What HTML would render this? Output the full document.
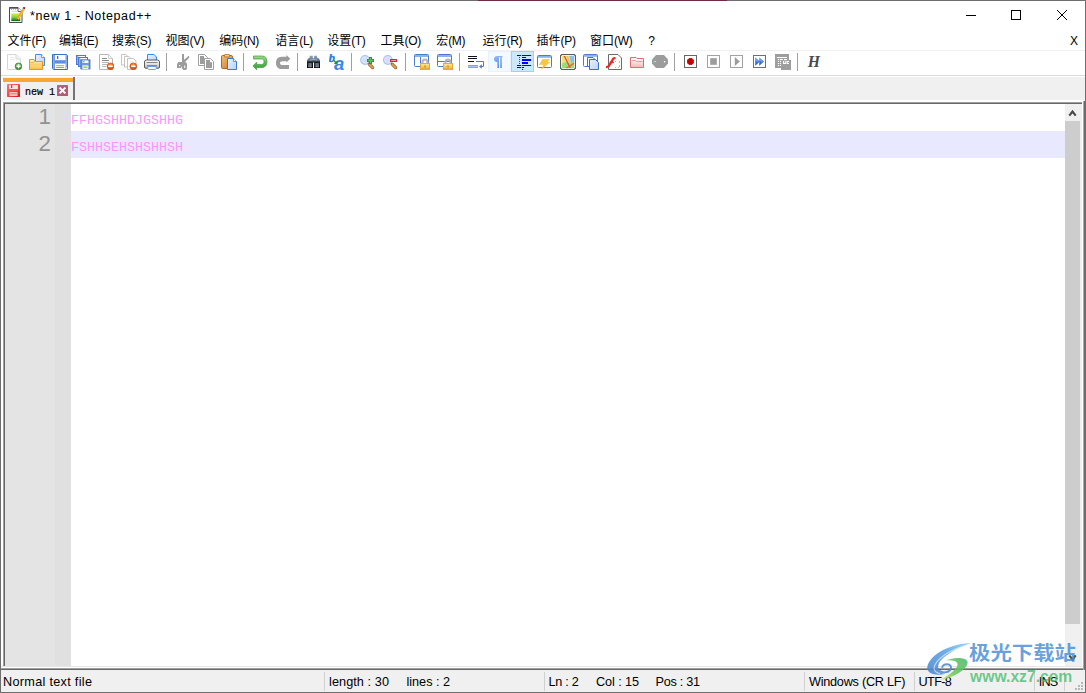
<!DOCTYPE html>
<html lang="zh-CN">
<head>
<meta charset="utf-8">
<title>*new 1 - Notepad++</title>
<style>
*{box-sizing:border-box;margin:0;padding:0}
html,body{width:1086px;height:693px;overflow:hidden;background:#fff}
body{position:relative;font-family:"Liberation Sans","Noto Sans CJK SC",sans-serif;font-size:12px;color:#000}
.abs{position:absolute}
#win{position:absolute;left:0;top:0;width:1086px;height:693px;background:#fff;overflow:hidden}
#bl{left:0;top:0;width:1px;height:693px;background:#6e6e6e}
#bt{left:0;top:0;width:1086px;height:1px;background:#6e6e6e}
#bb{left:0;top:692px;width:1086px;height:1px;background:#6e6e6e}
#br{left:1085px;top:0;width:1px;height:693px;background:#6e6e6e}
#title{left:30px;top:8px;font-size:12.500px;letter-spacing:0.6px;line-height:16px;white-space:nowrap}
#menubar{left:1px;top:31px;width:1085px;height:19px}
#menubar span{position:absolute;top:2px;line-height:16px;font-size:12px;white-space:nowrap}
#menubar i{font-style:normal;letter-spacing:-0.35px}
#menuline{left:1px;top:50px;width:1085px;height:1px;background:#f0f0f0}
#toolbar{left:1px;top:51px;width:1085px;height:24px;background:#fff}
.sep{position:absolute;top:53px;width:1px;height:18px;background:#a0a0a0}
.ic{position:absolute;top:54px;width:16px;height:16px}
#tabbar{left:1px;top:75px;width:1085px;height:27px;background:#f0f0f0;border-top:1px solid #dcdcdc;box-shadow:inset 0 1px 0 #fff, inset 2px 0 0 #fff}
#tab{left:3px;top:78px;width:71px;height:23px;background:#f0f0f0}
#tabtop{left:3px;top:78px;width:71px;height:4px;background:#faa732}
#tabr{left:73px;top:77px;width:2px;height:24px;background:#747474}
#tabtext{left:25px;top:85.5px;font-family:"Liberation Mono",monospace;font-weight:normal;-webkit-text-stroke:0.2px #000;font-size:10px;line-height:14px;white-space:pre}
#edwhite{left:1px;top:100px;width:1083px;height:2px;background:#fff}
#edtop1{left:3px;top:102px;width:1079px;height:1px;background:#a0a0a0}
#edtop2{left:4px;top:103px;width:1078px;height:1px;background:#696969}
#edl1{left:3px;top:102px;width:1px;height:566px;background:#a0a0a0}
#edl2{left:4px;top:103px;width:1px;height:565px;background:#696969}
#edr{left:1083px;top:101px;width:3px;height:569px;background:linear-gradient(to right,#a8a8a8 0,#a8a8a8 1px,#6a6a6a 1px,#6a6a6a 3px)}
#edrw{left:1082px;top:102px;width:1px;height:566px;background:#fff}
#editor{left:5px;top:104px;width:1077px;height:562px;background:#fff}
#lnmargin{left:5px;top:104px;width:50px;height:562px;background:#e4e4e4}
#foldmargin{left:55px;top:104px;width:16px;height:562px;background:#e0e0e0}
.ln{position:absolute;left:5px;width:46px;text-align:right;font-size:22.3px;line-height:27px;color:#929292;font-family:"Liberation Sans",sans-serif}
#curline{left:71px;top:131px;width:994px;height:27px;background:#e8e8ff}
.code{position:absolute;left:71px;font-family:"Liberation Mono",monospace;font-size:13.33px;line-height:27px;color:#ff94ff;white-space:pre}
#sb{left:1065px;top:104px;width:17px;height:563px;background:#f0f0f0}
#sbthumb{left:1065px;top:121px;width:15px;height:503px;background:#cdcdcd}
#edbot1{left:1px;top:666px;width:1082px;height:2px;background:#fff;border-top:1px solid #e6e6e6}
#edbot2{left:0;top:668px;width:1086px;height:2px;background:#696969;border-top:1px solid #a0a0a0}
#status{left:1px;top:670px;width:1084px;height:22px;background:#f0f0f0}
#status span{position:absolute;top:5px;font-size:12.7px;line-height:15px;white-space:nowrap}
.ssep{position:absolute;top:672px;width:1px;height:19px;background:#d0d0d0}
</style>
</head>
<body>
<div id="win">
<svg class="abs" style="left:9px;top:7px;width:17px;height:16px" viewBox="0 0 17 16">
<defs><linearGradient id="gti" x1="0" y1="0" x2="0" y2="1"><stop offset="0" stop-color="#d8ec40"/><stop offset="0.45" stop-color="#8ed648"/><stop offset="0.8" stop-color="#2c9a24"/><stop offset="1" stop-color="#0a5a0c"/></linearGradient></defs>
<path d="M0.500,0.500H9L13,4.500V15.500H0.500Z" fill="#fff" stroke="#4c4c4c"/>
<path d="M0.500,1H9" stroke="#4c4c4c" stroke-width="1.400"/>
<path d="M9,0.500V4.500H13" fill="#fff" stroke="#4c4c4c" stroke-width="0.900"/>
<path d="M2,2.400H3M4,2.400H5M6,2.400H7" stroke="#9a9a9a" stroke-width="0.800"/>
<path d="M2.500,4.300H8" stroke="#b4cde6" stroke-width="0.800"/>
<rect x="2.300" y="6.400" width="9" height="7.700" fill="url(#gti)"/>
<path d="M14.300,2.600L8.400,12.200" stroke="#f0a41a" stroke-width="2.600"/>
<path d="M14.800,2.900L9,12.400" stroke="#f8c848" stroke-width="0.900"/>
<path d="M8.700,11.700L7.800,13L9.300,12.600Z" fill="#5a3a10"/>
<path d="M14.900,1.700L14.200,2.800" stroke="#b8c8dc" stroke-width="2.600"/>
<rect x="14.100" y="0.100" width="2" height="1.900" fill="#8e0a0a" transform="rotate(30 15.1 1)"/>
</svg>
<div class="abs" style="left:966px;top:15px;width:10px;height:1px;background:#000"></div>
<div class="abs" style="left:1011px;top:10px;width:10px;height:10px;border:1px solid #000"></div>
<svg class="abs" style="left:1056px;top:9px;width:12px;height:12px" viewBox="0 0 12 12"><path d="M1,1L11,11M11,1L1,11" stroke="#000" stroke-width="1" fill="none"/></svg>

<div class="abs" id="title">*new 1 - Notepad++</div>
<!-- menu -->
<div class="abs" id="menubar">
<span style="left:6.5px">文件<i>(F)</i></span>
<span style="left:58.1px">编辑<i>(E)</i></span>
<span style="left:111.1px">搜索<i>(S)</i></span>
<span style="left:164.5px">视图<i>(V)</i></span>
<span style="left:218.3px">编码<i>(N)</i></span>
<span style="left:274.3px">语言<i>(L)</i></span>
<span style="left:326.2px">设置<i>(T)</i></span>
<span style="left:379.6px">工具<i>(O)</i></span>
<span style="left:435.2px">宏<i>(M)</i></span>
<span style="left:481.6px">运行<i>(R)</i></span>
<span style="left:535.6px">插件<i>(P)</i></span>
<span style="left:589.0px">窗口<i>(W)</i></span>
<span style="left:647.2px">?</span>
<span style="left:1069px">X</span>
</div>
<div class="abs" id="menuline"></div>
<div class="abs" id="toolbar"></div>
<div class="abs" style="left:488px;top:51px;width:23px;height:21px;background:#f3f9ff;border:1px solid #e8f2fc"></div>
<div class="abs" style="left:511px;top:51px;width:23px;height:21px;background:#cce8ff;border:1px solid #99d1ff"></div>
<svg class="ic" style="left:6px;top:54px" viewBox="0 0 16 16"><defs><linearGradient id="gnew" x1="0" y1="0" x2="0" y2="1"><stop offset="0" stop-color="#8fd46f"/><stop offset="1" stop-color="#2e8a1e"/></linearGradient></defs>
<path d="M1.5,0.5H10L14.5,5V15.5H1.5Z" fill="#fdfdfd" stroke="#d6d6d6"/>
<path d="M10,0.5V5H14.5" fill="#f2f2f2" stroke="#d9d9d9"/>
<path d="M4,3.5h4M4,5.5h5" stroke="#ececec"/>
<circle cx="12.5" cy="12.3" r="3.3" fill="url(#gnew)" stroke="#2f7d22" stroke-width="0.8"/>
<path d="M12.5,10.3v4M10.5,12.3h4" stroke="#fff" stroke-width="1.4"/></svg>
<svg class="ic" style="left:29px;top:54px" viewBox="0 0 16 16"><defs><linearGradient id="gop" x1="0" y1="0" x2="0" y2="1"><stop offset="0" stop-color="#fff2b8"/><stop offset="1" stop-color="#f7c340"/></linearGradient>
<linearGradient id="gpg" x1="0" y1="0" x2="1" y2="1"><stop offset="0" stop-color="#e8f1fe"/><stop offset="1" stop-color="#b9d3f8"/></linearGradient></defs>
<path d="M6.5,0.5H12.5L15.5,3.5V11.5H6.5Z" fill="url(#gpg)" stroke="#4d88dc"/>
<path d="M12.5,0.5V3.5H15.5" fill="#fff" stroke="#4d88dc" stroke-width="0.8"/>
<path d="M0.5,5.5H5L6.5,7.5H13.5V15.5H0.5Z" fill="url(#gop)" stroke="#e5922f"/>
<path d="M1.5,8.5H4.5L6,7" stroke="#f0b050" fill="none"/>
<path d="M1.5,10.2H12.5" stroke="#f3c566" stroke-width="0.8"/></svg>
<svg class="ic" style="left:52px;top:54px" viewBox="0 0 16 16"><defs><linearGradient id="gsv" x1="0" y1="0" x2="1" y2="0"><stop offset="0" stop-color="#9fc0f0"/><stop offset="0.2" stop-color="#5d8fe0"/><stop offset="0.8" stop-color="#5d8fe0"/><stop offset="1" stop-color="#9fc0f0"/></linearGradient></defs>
<path d="M0.5,0.5H14.5L15.5,1.5V15.5H1.5L0.5,14.5Z" fill="url(#gsv)" stroke="#3e6ebf"/>
<rect x="3" y="1" width="10.5" height="5.2" fill="#fff"/>
<rect x="5" y="2" width="1.3" height="3" fill="#3e6ebf"/>
<rect x="3" y="9.6" width="10.5" height="5.4" fill="#fff"/>
<rect x="4.2" y="11.2" width="8" height="1" fill="#7cc04a"/>
<rect x="4.2" y="13" width="8" height="1" fill="#7cc04a"/>
<rect x="14" y="13.6" width="1" height="1" fill="#fff"/></svg>
<svg class="ic" style="left:75px;top:54px" viewBox="0 0 16 16"><rect x="1.5" y="1.5" width="9" height="9" fill="#e4edfb" stroke="#4a7bd0"/><rect x="2" y="2" width="1.6" height="8" fill="#8fb0ec"/><rect x="3.6" y="2" width="6" height="1.2" fill="#fff"/><rect x="3.5" y="3.5" width="9" height="9" fill="#e4edfb" stroke="#4a7bd0"/><rect x="4" y="4" width="1.6" height="8" fill="#8fb0ec"/><rect x="5.6" y="4" width="6" height="1.2" fill="#fff"/><rect x="5.9" y="5.9" width="9" height="9" fill="#6a98e4" stroke="#3e6ebf"/><rect x="7.4" y="6.4" width="6" height="2.6" fill="#fff"/><rect x="8.4" y="6.9" width="1" height="1.5" fill="#3e6ebf"/><rect x="7.4" y="11.4" width="6" height="3.5" fill="#fff"/><rect x="8.2" y="12.4" width="4.4" height="1.6" fill="#a4d840"/></svg>
<svg class="ic" style="left:98px;top:54px" viewBox="0 0 16 16"><defs><radialGradient id="gcl" cx="0.5" cy="0.3" r="0.7"><stop offset="0" stop-color="#f79a4a"/><stop offset="1" stop-color="#d5480a"/></radialGradient></defs>
<path d="M1.5,0.5H10.5L14.5,4.5V15.5H1.5Z" fill="#fff" stroke="#b5b5b5"/>
<path d="M10.5,0.5V4.5H14.5" fill="#f4f4f4" stroke="#c5c5c5" stroke-width="0.8"/>
<path d="M4,4.5h5M4,6.5h7" stroke="#8a8a8a"/><path d="M4,8.5h7M4,10.5h5M4,12.5h4" stroke="#b8b8b8"/>
<circle cx="12.5" cy="12.3" r="3.4" fill="url(#gcl)" stroke="#c4470c" stroke-width="0.6"/>
<rect x="10.2" y="11.6" width="4.6" height="1.5" rx="0.4" fill="#fff"/></svg>
<svg class="ic" style="left:121px;top:54px" viewBox="0 0 16 16"><defs><radialGradient id="gcl2" cx="0.5" cy="0.3" r="0.7"><stop offset="0" stop-color="#f79a4a"/><stop offset="1" stop-color="#d5480a"/></radialGradient></defs><path d="M0.5,0.5H5.0L7.5,3.0V11.0H0.5Z" fill="#fff" stroke="#c4c4c4"/><path d="M3.5,2.5H8.0L10.5,5.0V13.0H3.5Z" fill="#fff" stroke="#c4c4c4"/><path d="M6.5,4.5H12.5L15.0,7.0V15.5H6.5Z" fill="#fff" stroke="#c4c4c4"/>
<path d="M9,8h3" stroke="#e4e4e4"/>
<circle cx="12.3" cy="12.3" r="3.4" fill="url(#gcl2)" stroke="#c4470c" stroke-width="0.6"/>
<rect x="10" y="11.6" width="4.6" height="1.5" rx="0.4" fill="#fff"/></svg>
<svg class="ic" style="left:144px;top:54px" viewBox="0 0 16 16"><defs><linearGradient id="gpr" x1="0" y1="0" x2="0" y2="1"><stop offset="0" stop-color="#ffffff"/><stop offset="0.5" stop-color="#e2e2e2"/><stop offset="1" stop-color="#b4b4b4"/></linearGradient>
<linearGradient id="gpg2" x1="0" y1="0" x2="1" y2="1"><stop offset="0" stop-color="#e8f1fe"/><stop offset="1" stop-color="#b9d3f8"/></linearGradient></defs>
<path d="M3.5,7V0.5H10L12.5,3V7Z" fill="url(#gpg2)" stroke="#3d88e0"/>
<path d="M2.5,6H13.5Q15.5,6 15.5,8V13Q15.500,14.200 14.500,14.200H1.5Q0.5,14.200 0.5,13V8Q0.5,6 2.5,6Z" fill="url(#gpr)" stroke="#4a4a4a" stroke-width="0.9"/>
<path d="M2.5,8.5H13.5" stroke="#6a6a6a" stroke-width="0.8"/>
<path d="M3.800,12.500H12.200V14.700L11.400,15.500H4.600L3.800,14.700Z" fill="#f4f8ff" stroke="#5a9ae6" stroke-width="0.900"/><path d="M3,11.500H13" stroke="#707070" stroke-width="0.800"/></svg>
<div class="sep" style="left:166px"></div>
<svg class="ic" style="left:175px;top:54px" viewBox="0 0 16 16"><path d="M7,0H9V5.800L12.300,3.200L13,2L14.300,2.200L14,4L10,8L11.200,8.500L12,10V14.500L11,16H8.500L7,14.500V12L6,14H2V10L3.500,8H7Z" fill="#9c9c9c"/>
<rect x="4" y="11" width="1.200" height="1.200" fill="#fff"/><rect x="9.200" y="11.500" width="1" height="2.600" fill="#fff"/></svg>
<svg class="ic" style="left:198px;top:54px" viewBox="0 0 16 16"><path d="M0.5,0.5H6.5L9.5,3.5V11.5H0.5Z" fill="#fff" stroke="#a0a0a0"/>
<path d="M2,2H6V4.2H8V10H2Z" fill="#9c9c9c"/>
<path d="M6.500,4.5H12.500L15.500,7.5V15.500H6.500Z" fill="#fff" stroke="#a0a0a0"/>
<path d="M8,6H12V8.200H14V14H8Z" fill="#9c9c9c"/></svg>
<svg class="ic" style="left:221px;top:54px" viewBox="0 0 16 16"><defs><linearGradient id="gpa" x1="0" y1="0" x2="1" y2="1"><stop offset="0" stop-color="#f0c080"/><stop offset="1" stop-color="#c47a30"/></linearGradient>
<linearGradient id="gpg3" x1="0" y1="0" x2="1" y2="1"><stop offset="0" stop-color="#e8f1fe"/><stop offset="1" stop-color="#b9d3f8"/></linearGradient></defs>
<rect x="0.5" y="1.5" width="11" height="13" rx="1.2" fill="url(#gpa)" stroke="#b0671c"/>
<rect x="3.5" y="0.5" width="5" height="2.4" rx="0.6" fill="#f9d778" stroke="#b0671c" stroke-width="0.8"/>
<path d="M6.500,4.5H12.500L15.500,7.5V15.500H6.500Z" fill="url(#gpg3)" stroke="#3c78d8"/>
<path d="M12.500,4.5V7.5H15.500" fill="#fff" stroke="#3c78d8" stroke-width="0.8"/></svg>
<div class="sep" style="left:243px"></div>
<svg class="ic" style="left:252px;top:54px" viewBox="0 0 16 16"><defs><linearGradient id="gun" x1="0" y1="0" x2="0" y2="1"><stop offset="0" stop-color="#9fdc8f"/><stop offset="0.5" stop-color="#5cb85c"/><stop offset="1" stop-color="#3a9a3a"/></linearGradient></defs>
<path d="M1.5,2H10C13.500,2 15,4.5 15,7.700C15,11 13.200,13.500 10,13.500H4.600V15.800L1,12L4.600,8.200V10.400H9.800C11.400,10.400 12,9.200 12,7.700C12,6.200 11.400,5 9.800,5H1.500Z" fill="url(#gun)" stroke="#3f9a33" stroke-width="0.7"/></svg>
<svg class="ic" style="left:275px;top:54px" viewBox="0 0 16 16"><path d="M11.500,1L15.300,4.800L11.500,8.500V7.300H7.500C6,7.300 5,8 5,9.200C5,10.400 6,11 7.500,11H14V15H6.200C3,15 1,12.500 1,9C1,5.500 3,2.700 6.500,2.700H11.500Z" fill="#9c9c9c"/></svg>
<div class="sep" style="left:297px"></div>
<svg class="ic" style="left:306px;top:54px" viewBox="0 0 16 16"><defs><linearGradient id="gfi" x1="0" y1="0" x2="0" y2="1"><stop offset="0" stop-color="#93a5bb"/><stop offset="0.380" stop-color="#62717f"/><stop offset="0.520" stop-color="#1a1e24"/><stop offset="1" stop-color="#08080a"/></linearGradient>
<linearGradient id="gfh" x1="0" y1="0" x2="0" y2="1"><stop offset="0" stop-color="#6c7888"/><stop offset="1" stop-color="#aab4c0"/></linearGradient></defs>
<path d="M3.600,1.800H6.800V4.200H8.100V1.800H11V3.800L13,4.500L14,6.500V14H8.100V8.500H7V14H1V6.500L2,4.500L3.600,3.800Z" fill="url(#gfi)"/>
<path d="M4,6.200C6,5.200 9,5.200 11,6.200" stroke="#9cc0e8" stroke-width="0.800" fill="none"/>
<rect x="2.400" y="9" width="3.200" height="4.200" fill="url(#gfh)"/><rect x="9.500" y="9" width="3.200" height="4.200" fill="url(#gfh)"/>
<path d="M3.900,9.500V13.200M11,9.500V13.200" stroke="#3c4654" stroke-width="0.800"/></svg>
<svg class="ic" style="left:329px;top:54px" viewBox="0 0 16 16"><text x="-0.200" y="8" font-family="Liberation Serif,serif" font-weight="bold" font-style="italic" font-size="12.500" fill="#2f78e0" stroke="#2f78e0" stroke-width="0.300">b</text>
<text x="5" y="15.900" font-family="Liberation Sans,sans-serif" font-weight="bold" font-style="italic" font-size="18.500" fill="#3f86e6">a</text>
<path d="M4.200,5.800L7,8.600" stroke="#3aa040" stroke-width="1.500"/><path d="M8.800,10.400L4.800,9.800L8.200,6.400Z" fill="#2f9030"/></svg>
<div class="sep" style="left:351px"></div>
<svg class="ic" style="left:360px;top:54px" viewBox="0 0 16 16"><circle cx="5" cy="6" r="4.300" fill="#dbe8fa" stroke="#a9c5ee" stroke-width="1.2"/><circle cx="5" cy="6" r="2.600" fill="#cfe0f7"/><path d="M9.200,10.200L12.600,13.600" stroke="#9a5f24" stroke-width="3.200" stroke-linecap="round"/><path d="M9.200,10.200L12.600,13.600" stroke="#d9a866" stroke-width="1.600" stroke-linecap="round"/><path d="M10.500,3V10M7,6.500H14" stroke="#2f8a35" stroke-width="3"/><path d="M10.500,3.800V9.200M7.800,6.500H13.200" stroke="#5fc060" stroke-width="1.400"/></svg>
<svg class="ic" style="left:383px;top:54px" viewBox="0 0 16 16"><circle cx="4.8" cy="6" r="4.300" fill="#dbe8fa" stroke="#a9c5ee" stroke-width="1.2"/><circle cx="4.8" cy="6" r="2.600" fill="#cfe0f7"/><path d="M9.200,10.200L12.600,13.600" stroke="#9a5f24" stroke-width="3.200" stroke-linecap="round"/><path d="M9.200,10.200L12.600,13.600" stroke="#d9a866" stroke-width="1.600" stroke-linecap="round"/><rect x="7" y="5" width="7" height="3" rx="0.5" fill="#e81c2c"/><rect x="8" y="6" width="5" height="1" fill="#ff9aa0"/></svg>
<div class="sep" style="left:405px"></div>
<svg class="ic" style="left:414px;top:54px" viewBox="0 0 16 16"><defs><linearGradient id="lg1" x1="0" y1="0" x2="0" y2="1"><stop offset="0" stop-color="#fdeea8"/><stop offset="0.5" stop-color="#f7cc58"/><stop offset="1" stop-color="#eaa22a"/></linearGradient></defs><rect x="0.500" y="0.500" width="14" height="12" rx="1" fill="#fff" stroke="#4b7bcd"/>
<rect x="1" y="1" width="13" height="2" fill="#8db2ea"/>
<path d="M6.500,3V12.500" stroke="#4b7bcd"/><path d="M8.500,9.500V8A2.500,2.500 0 0 1 13.500,8V9.500" fill="none" stroke="#b4b4b4" stroke-width="2"/>
<rect x="6.500" y="9.500" width="9" height="6" fill="url(#lg1)" stroke="#e6a83a"/>
<rect x="10" y="11.500" width="2" height="2" fill="#c88a2a" opacity="0.7"/></svg>
<svg class="ic" style="left:437px;top:54px" viewBox="0 0 16 16"><defs><linearGradient id="lg2" x1="0" y1="0" x2="0" y2="1"><stop offset="0" stop-color="#fdeea8"/><stop offset="0.5" stop-color="#f7cc58"/><stop offset="1" stop-color="#eaa22a"/></linearGradient></defs><rect x="0.500" y="0.500" width="14" height="12" rx="1" fill="#fff" stroke="#4b7bcd"/>
<rect x="1" y="1" width="13" height="2" fill="#8db2ea"/>
<path d="M0.500,7.500H14.500" stroke="#4b7bcd"/><path d="M8.500,9.500V8A2.500,2.500 0 0 1 13.500,8V9.500" fill="none" stroke="#b4b4b4" stroke-width="2"/>
<rect x="6.500" y="9.500" width="9" height="6" fill="url(#lg2)" stroke="#e6a83a"/>
<rect x="10" y="11.500" width="2" height="2" fill="#c88a2a" opacity="0.7"/></svg>
<div class="sep" style="left:459px"></div>
<svg class="ic" style="left:468px;top:54px" viewBox="0 0 16 16"><path d="M0,2.500H9M0,4.500H9M0,7.500H6" stroke="#111" stroke-width="1"/>
<path d="M8,7.500H15.500V12.500H13" fill="none" stroke="#4a7cc4" stroke-width="1"/>
<path d="M11,12.500L13.800,10.300V14.700Z" fill="#4a7cc4"/>
<rect x="0" y="11" width="10" height="3" fill="#7ea8e8"/>
<rect x="0" y="12" width="10" height="1" fill="#a9c6f2"/></svg>
<svg class="ic" style="left:491px;top:54px" viewBox="0 0 16 16"><defs><linearGradient id="gpl" x1="0" y1="0" x2="0" y2="1"><stop offset="0" stop-color="#8fb6f0"/><stop offset="1" stop-color="#5a8de0"/></linearGradient></defs>
<path d="M6.500,2H11.500V3.300H10.800V14H9.200V3.300H8V14H6.400V8.200C4,8.200 3,6.800 3,5.100C3,3.400 4,2 6.500,2Z" fill="url(#gpl)"/></svg>
<svg class="ic" style="left:516px;top:54px" viewBox="0 0 16 16"><g stroke="#0000ff" stroke-width="1">
<path d="M1,1.500H5M6,1.500H15"/><path d="M6,3.500H10"/>
<path d="M6,6H15" stroke-width="2"/><path d="M6,9H12" stroke-width="2"/>
<path d="M1,11.500H5M6,11.500H15"/><path d="M1,13.500H5M6,13.500H8"/><path d="M6,15.500H7"/></g>
<g fill="#ff0000"><rect x="3" y="3" width="1" height="1"/><rect x="3" y="5" width="1" height="1"/><rect x="3" y="7" width="1" height="1"/><rect x="3" y="9" width="1" height="1"/></g></svg>
<svg class="ic" style="left:537px;top:54px" viewBox="0 0 16 16"><rect x="0.500" y="1.500" width="14" height="12" rx="1" fill="#fff" stroke="#4b7bcd"/>
<rect x="1" y="2" width="13" height="1.800" fill="#8db2ea"/>
<path d="M5.500,5.500H12.500L9.800,8.300H12.800L4.500,15.200L6.800,10.500H2.500Z" fill="#f6c842" stroke="#f0b020" stroke-width="0.4"/></svg>
<svg class="ic" style="left:560px;top:54px" viewBox="0 0 16 16"><rect x="0.500" y="0.500" width="15" height="15" rx="1.800" fill="#e9e378" stroke="#4e4e58"/>
<path d="M9,1H15V8L11,9Z" fill="#8fbcec"/>
<path d="M1,10L6,8L11,9L15,8V15H1Z" fill="#98dc78"/>
<path d="M4,1.500L10.500,14.500" stroke="#f04838" stroke-width="1.300"/>
<path d="M14.500,9L6,14.500" stroke="#f06030" stroke-width="1.300"/>
<path d="M7,1.500L9.500,8" stroke="#f0b040" stroke-width="0.800"/>
<rect x="1.500" y="1.500" width="13" height="13" rx="1" fill="none" stroke="#fff" stroke-opacity="0.7"/><rect x="0.500" y="0.500" width="15" height="15" rx="1.800" fill="none" stroke="#5a5a60"/></svg>
<svg class="ic" style="left:583px;top:54px" viewBox="0 0 16 16"><defs><linearGradient id="gdl" x1="0" y1="0" x2="1" y2="1"><stop offset="0" stop-color="#e8f1fe"/><stop offset="1" stop-color="#b9d3f8"/></linearGradient></defs>
<rect x="0.500" y="0.500" width="14" height="12" rx="1" fill="#fff" stroke="#4b7bcd"/>
<rect x="1" y="1" width="13" height="1.800" fill="#8db2ea"/>
<path d="M4.500,12.500V3.500H10L12.500,6" fill="#fff" stroke="#3c6ccc"/>
<path d="M6.500,5.500H12.500L15.500,8.500V15.500H6.500Z" fill="url(#gdl)" stroke="#3c6ccc"/></svg>
<svg class="ic" style="left:606px;top:54px" viewBox="0 0 16 16"><path d="M2.500,0.500H12L15.500,4V15.500H2.500Z" fill="#fffef8" stroke="#6c6c6c"/>
<path d="M9.500,7V8M13.500,7V9M13.500,11V13M12,13.500H13M9.500,13V14" stroke="#6a8a6a" stroke-width="0.800" opacity="0.7"/>
<path d="M0.800,13L2.800,12.200L7.300,4.600L8.600,4.200" fill="none" stroke="#e62a2a" stroke-width="2.300" stroke-linecap="round"/>
<path d="M3.800,8.400H7.800" stroke="#e62a2a" stroke-width="1.600"/></svg>
<svg class="ic" style="left:629px;top:54px" viewBox="0 0 16 16"><defs><linearGradient id="gfo" x1="0" y1="0" x2="0" y2="1"><stop offset="0" stop-color="#fff"/><stop offset="1" stop-color="#f3b8b8"/></linearGradient></defs>
<path d="M1.500,3.500H7L8,4.500H14.500V13.500H1.500Z" fill="url(#gfo)" stroke="#dc6e6e"/>
<path d="M3,6.500H6.500L7.500,7.500H13.500" fill="none" stroke="#e89c9c"/></svg>
<svg class="ic" style="left:652px;top:54px" viewBox="0 0 16 16"><path d="M4,1H12L16,5.500V9.500L12,14H4L0,9.500V5.500Z" fill="#9c9c9c"/>
<path d="M2.300,8.300L3.700,6.900" stroke="#fff" stroke-width="1"/><circle cx="12.600" cy="7.700" r="0.800" fill="#fff"/></svg>
<div class="sep" style="left:674px"></div>
<svg class="ic" style="left:683px;top:54px" viewBox="0 0 16 16"><rect x="1.500" y="1.500" width="12" height="12" fill="#fff" stroke="#666"/>
<path d="M6,4.500H9L10.500,6V9L9,10.500H6L4.500,9V6Z" fill="#c80000" stroke="#c80000" stroke-width="0.800"/></svg>
<svg class="ic" style="left:706px;top:54px" viewBox="0 0 16 16"><rect x="1.500" y="1.500" width="12" height="12" fill="#fff" stroke="#a2a2a2"/>
<rect x="4.200" y="4.200" width="6.600" height="6.600" fill="#9c9c9c"/></svg>
<svg class="ic" style="left:729px;top:54px" viewBox="0 0 16 16"><rect x="1.500" y="1.500" width="12" height="12" fill="#fff" stroke="#a2a2a2"/>
<path d="M5.800,3V12L10.800,7.500Z" fill="#9c9c9c"/></svg>
<svg class="ic" style="left:752px;top:54px" viewBox="0 0 16 16"><defs><linearGradient id="gpm" x1="0" y1="0" x2="0" y2="1"><stop offset="0" stop-color="#6aa4f4"/><stop offset="1" stop-color="#1c54c8"/></linearGradient></defs>
<rect x="1.500" y="1.500" width="12" height="12" fill="#fff" stroke="#707070"/>
<path d="M3.200,3.200V11.800L8,7.500Z" fill="url(#gpm)"/><path d="M7.200,3.200V11.800L12,7.500Z" fill="url(#gpm)"/>
<path d="M4,5.500L6,7.500" stroke="#a8ccff" stroke-width="0.800"/><path d="M8,5.500L10,7.500" stroke="#a8ccff" stroke-width="0.800"/></svg>
<svg class="ic" style="left:775px;top:54px" viewBox="0 0 16 16"><rect x="0" y="0" width="14" height="14" fill="#9e9e9e"/>
<rect x="6" y="6" width="10" height="10" fill="#9e9e9e"/>
<g fill="#fff"><rect x="1.900" y="3" width="10.100" height="1.050"/>
<rect x="2.900" y="5" width="1.200" height="1.100"/><rect x="4.900" y="5" width="2.900" height="1.100"/><rect x="9" y="5" width="3" height="1.100"/>
<rect x="2.900" y="6.900" width="1.200" height="1.100"/><rect x="4.900" y="6.900" width="1.200" height="1.100"/>
<rect x="2.900" y="9" width="1.200" height="1.100"/><rect x="4.900" y="9" width="1.200" height="1.100"/>
<rect x="2.900" y="11" width="1.200" height="1.100"/><rect x="4.900" y="11" width="1.200" height="1.100"/>
<rect x="8" y="6.900" width="6" height="3.100"/></g>
<g fill="#9e9e9e"><rect x="9.200" y="6.900" width="1.100" height="2"/><rect x="11.200" y="6.900" width="0.500" height="3.100"/><rect x="12.700" y="7.900" width="1.300" height="1.100"/></g></svg>
<div class="sep" style="left:797px"></div>
<div class="abs" style="left:805.500px;top:51px;width:16px;height:20px;font-family:'Liberation Serif',serif;font-weight:bold;font-style:italic;font-size:17.500px;line-height:20px;color:#4a4a4a;text-align:center;transform:scaleX(0.900)">H</div>
<div class="abs" id="tabbar"></div>
<div class="abs" id="tab"></div>
<div class="abs" id="tabtop"></div>
<div class="abs" id="tabr"></div>
<div class="abs" id="tabtext">new 1</div>
<svg class="abs" style="left:7px;top:84px;width:13px;height:13px" viewBox="0 0 13 13">
<defs><linearGradient id="gts" x1="0" y1="0" x2="1" y2="1"><stop offset="0" stop-color="#f87878"/><stop offset="0.5" stop-color="#f04848"/><stop offset="1" stop-color="#d01818"/></linearGradient></defs>
<rect x="0" y="0" width="13" height="13" rx="0.800" fill="url(#gts)"/>
<rect x="2" y="1" width="9" height="4" fill="#fde0e0"/>
<rect x="4" y="1" width="1.300" height="3" fill="#e03838"/>
<rect x="2" y="5" width="9" height="2" fill="#f25858"/>
<rect x="2.500" y="8" width="8" height="4" fill="#fbc0c0"/>
<rect x="3.200" y="9.300" width="6.600" height="0.900" fill="#f07070"/>
</svg>
<svg class="abs" style="left:57px;top:85px;width:11px;height:11px" viewBox="0 0 11 11">
<defs><linearGradient id="gtc" x1="0" y1="0" x2="1" y2="1"><stop offset="0" stop-color="#a86a92"/><stop offset="1" stop-color="#b85466"/></linearGradient></defs>
<rect x="0" y="0" width="11" height="11" rx="0.600" fill="url(#gtc)"/>
<path d="M2.600,2.600L8.400,8.400M8.400,2.600L2.600,8.400" stroke="#fff" stroke-width="2"/>
</svg>

<div class="abs" id="edwhite"></div>
<div class="abs" id="editor"></div>
<div class="abs" id="lnmargin"></div>
<div class="abs" id="foldmargin"></div>
<div class="abs" id="curline"></div>
<div class="ln" style="top:103px">1</div>
<div class="ln" style="top:130px">2</div>
<div class="code" style="top:107px">FFHGSHHDJGSHHG</div>
<div class="code" style="top:134px">FSHHSEHSHSHHSH</div>
<div class="abs" id="sb"></div>
<div class="abs" id="sbthumb"></div>
<div class="abs" id="edtop1"></div>
<div class="abs" id="edtop2"></div>
<div class="abs" id="edl1"></div>
<div class="abs" id="edl2"></div>
<div class="abs" id="edrw"></div>
<div class="abs" id="edbot1"></div>
<div class="abs" id="edbot2"></div>
<div class="abs" id="edr"></div>
<div class="abs" id="status">
<span style="left:2px;letter-spacing:0.29px">Normal text file</span>
<span style="left:328px;letter-spacing:0.07px">length : 30</span>
<span style="left:405.5px;letter-spacing:-0.03px">lines : 2</span>
<span style="left:547.6px;letter-spacing:-0.29px">Ln : 2</span>
<span style="left:595px;letter-spacing:-0.1px">Col : 15</span>
<span style="left:654.5px;letter-spacing:-0.29px">Pos : 31</span>
<span style="left:808px;letter-spacing:-0.26px">Windows (CR LF)</span>
<span style="left:917.6px;letter-spacing:-0.69px">UTF-8</span>
<span style="left:1037.8px;letter-spacing:-0.83px">INS</span>
</div>
<div class="ssep" style="left:324px"></div><div class="ssep" style="left:544px"></div><div class="ssep" style="left:804px"></div><div class="ssep" style="left:914px"></div><div class="ssep" style="left:1034px"></div><div class="ssep" style="left:1064px"></div>
<svg class="abs" style="left:1072px;top:681px;width:14px;height:14px" viewBox="0 0 14 14"><g fill="#b8b8b8"><rect x="9" y="1" width="2" height="2"/><rect x="6" y="4" width="2" height="2"/><rect x="9" y="4" width="2" height="2"/><rect x="3" y="7" width="2" height="2"/><rect x="6" y="7" width="2" height="2"/><rect x="9" y="7" width="2" height="2"/></g></svg>
<svg class="abs" style="left:1065px;top:104px;width:17px;height:17px" viewBox="1065 104 17 17"><path d="M1069.300,115.700L1072.500,111.500L1075.700,115.700" fill="none" stroke="#4a4a4a" stroke-width="2.100"/></svg>
<svg class="abs" style="left:1065px;top:649px;width:17px;height:17px" viewBox="1065 649 17 17"><path d="M1069.300,655.300L1072.500,659.500L1075.700,655.300" fill="none" stroke="#4a4a4a" stroke-width="2.100"/></svg>

<svg class="abs" style="left:920px;top:636px;width:60px;height:50px" viewBox="920 636 60 50">
<defs><linearGradient id="gwb" x1="1" y1="0" x2="0" y2="1"><stop offset="0" stop-color="#86d4fa"/><stop offset="0.45" stop-color="#5aa0e4"/><stop offset="1" stop-color="#4a84d0"/></linearGradient>
<linearGradient id="gwg" x1="1" y1="0" x2="0" y2="1"><stop offset="0" stop-color="#4cba6c"/><stop offset="0.6" stop-color="#6cc860"/><stop offset="1" stop-color="#dcea60"/></linearGradient></defs>
<g opacity="0.880">
<path d="M971,643C951,643.500 930,654 927.300,667C926,673.500 936,676.500 945.500,673.800C941,673.400 937.400,670.500 938.300,665.500C940,657 957,648 971,643Z" fill="url(#gwb)"/>
<path d="M964,646C949,650.500 937,658.500 934.300,666.500C933.300,670.500 936,673 940,673.600" fill="none" stroke="#fff" stroke-opacity="0.600" stroke-width="1.200"/>
<path d="M939,670.500C942,673.200 947.500,673 950.200,670C952.300,667.300 950.500,664.200 947,664.200C944,664.200 942,666 942.300,667.800" fill="none" stroke="#4c88d4" stroke-width="1.900"/>
<path d="M946,660.500C953,657 966,657 967.500,661.500C969,668 955,677.500 940,680C950,675 958,668 957.500,664C957,660.500 951,660 946,660.500Z" fill="url(#gwg)"/>
</g>
</svg>
<div class="abs" style="left:969px;top:640px;font-family:'Liberation Sans','Noto Sans CJK SC',sans-serif;font-weight:bold;font-size:21.400px;line-height:30px;color:rgba(70,140,214,0.820);white-space:nowrap;transform:scaleY(0.89);transform-origin:0 5px">极光下载站</div>
<div class="abs" style="left:970px;top:667px;font-family:'Liberation Sans',sans-serif;font-weight:bold;font-size:15.700px;line-height:20px;color:rgba(70,190,110,0.780);white-space:nowrap">www.xz7.com</div>

<div class="abs" id="bl"></div>
<div class="abs" id="bt"></div>
<div class="abs" style="left:478px;top:0;width:249px;height:1px;background:#6e2a48"></div>
<div class="abs" id="bb"></div>
<div class="abs" id="br"></div>
</div>
</body>
</html>
